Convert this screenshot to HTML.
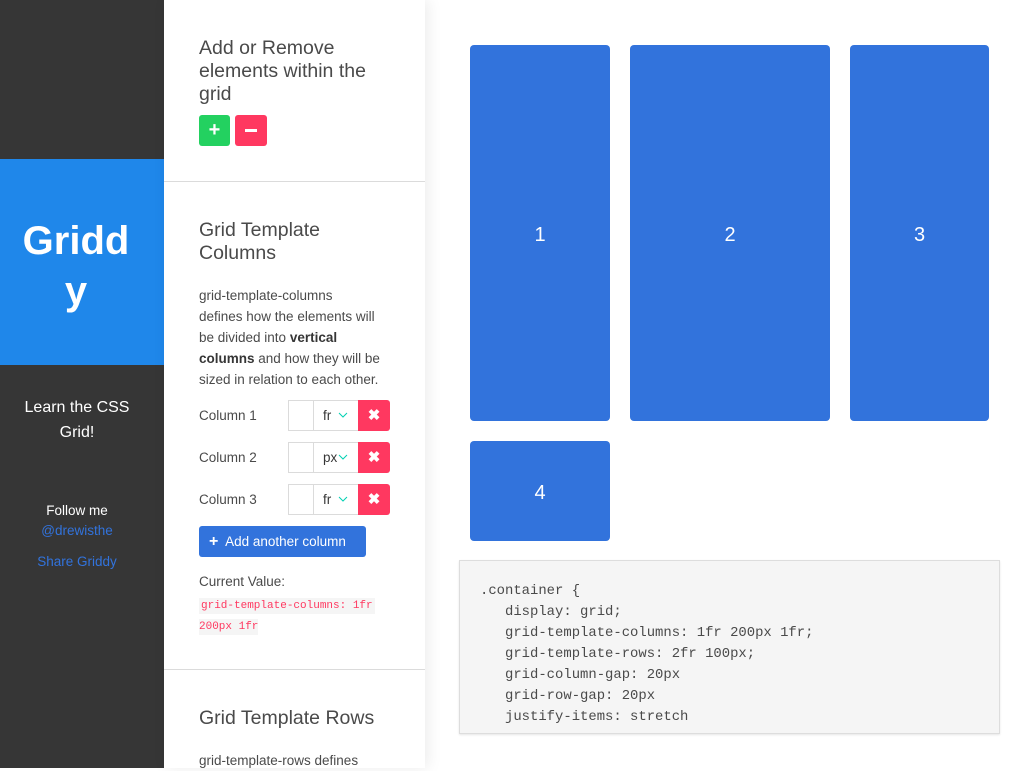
<!DOCTYPE html>
<html><head><meta charset="utf-8"><style>
*{box-sizing:border-box;margin:0;padding:0}
body{width:1024px;height:768px;overflow:hidden;font-family:"Liberation Sans",sans-serif;background:#fff;position:relative;color:#4a4a4a}
.a{position:absolute}
#side{left:0;top:0;width:164px;height:768px;background:#363636}
#logo{left:0;top:159px;width:164px;height:206px;background:#1f87ea;color:#fff;font-weight:bold;font-size:40px;line-height:50px;text-align:center;padding-top:57px;padding-right:12px}
#mid{left:164px;top:0;width:261px;height:768px;background:#fff;box-shadow:3px 0 14px rgba(0,0,0,.08)}
h2{position:absolute;left:35px;font-weight:normal;font-size:19.5px;line-height:23px;color:#4a4a4a;width:200px}
.hr{position:absolute;left:0;width:261px;height:1px;background:#dbdbdb}
p.t{position:absolute;left:35px;width:200px;font-size:13.5px;line-height:21px;color:#4a4a4a;white-space:nowrap}
.lbl{position:absolute;left:35px;font-size:13.5px}
.in{position:absolute;left:124px;width:26px;height:31px;border:1px solid #dbdbdb;border-right:none;background:#fff}
.sel{position:absolute;left:149px;width:46px;height:31px;border:1px solid #dbdbdb;font-size:13.5px;line-height:29px;padding-left:9px;color:#363636}
.sel svg{position:absolute;left:24px;top:11px}
.x{position:absolute;left:194px;width:32px;height:31px;background:#ff3860;border-radius:0 3px 3px 0;color:#fff;font-weight:bold;font-size:15px;text-align:center;line-height:31px}
.box{position:absolute;background:#3273dc;border-radius:4px;color:#fff;font-size:20px;display:flex;align-items:center;justify-content:center;padding-top:4px}
pre{position:absolute;left:459px;top:560px;width:541px;height:174px;background:#f5f5f5;border:1px solid #ddd;box-shadow:0 1px 2px rgba(0,0,0,.1);font-family:"Liberation Mono",monospace;font-size:13.9px;line-height:21px;padding:20px 20px;color:#4a4a4a}
</style></head><body>
<div class="a" id="side"></div>
<div class="a" id="logo">Gridd<br>y</div>
<div class="a" style="left:0;top:395px;width:154px;text-align:center;color:#fff;font-size:16px;line-height:25px">Learn the CSS<br>Grid!</div>
<div class="a" style="left:0;top:501px;width:154px;text-align:center;color:#fff;font-size:13.5px;line-height:20px">Follow me</div>
<div class="a" style="left:0;top:521px;width:154px;text-align:center;color:#3273dc;font-size:13.5px;line-height:20px">@drewisthe</div>
<div class="a" style="left:0;top:552px;width:154px;text-align:center;color:#3273dc;font-size:13.5px;line-height:20px">Share Griddy</div>

<div class="a" id="mid">
<h2 style="top:37px">Add or Remove elements within the grid</h2>
<div class="a" style="left:35px;top:115px;width:31px;height:31px;background:#23d160;border-radius:3px;color:#fff;font-weight:bold;font-size:20px;text-align:center;line-height:30px">+</div>
<div class="a" style="left:71px;top:115px;width:32px;height:31px;background:#ff3860;border-radius:3px"><div style="position:absolute;left:10px;top:14px;width:12px;height:3px;background:#fff"></div></div>
<div class="hr" style="top:181px"></div>
<h2 style="top:219px">Grid Template<br>Columns</h2>
<p class="t" style="top:285px">grid-template-columns<br>defines how the elements will<br>be divided into <b style="color:#363636">vertical</b><br><b style="color:#363636">columns</b> and how they will be<br>sized in relation to each other.</p>
<div class="lbl" style="top:408px">Column 1</div><div class="in" style="top:400px"></div><div class="sel" style="top:400px">fr<svg width="10" height="6"><path d="M1 1L5 5L9 1" stroke="#00d1b2" fill="none"/></svg></div><div class="x" style="top:400px">✖</div>
<div class="lbl" style="top:450px">Column 2</div><div class="in" style="top:442px"></div><div class="sel" style="top:442px">px<svg width="10" height="6"><path d="M1 1L5 5L9 1" stroke="#00d1b2" fill="none"/></svg></div><div class="x" style="top:442px">✖</div>
<div class="lbl" style="top:492px">Column 3</div><div class="in" style="top:484px"></div><div class="sel" style="top:484px">fr<svg width="10" height="6"><path d="M1 1L5 5L9 1" stroke="#00d1b2" fill="none"/></svg></div><div class="x" style="top:484px">✖</div>
<div class="a" style="left:35px;top:526px;width:167px;height:31px;background:#3273dc;border-radius:3px;color:#fff;font-size:13.5px;line-height:31px;padding-left:10px"><b style="font-size:16px">+</b>&nbsp; Add another column</div>
<div class="lbl" style="top:574px">Current Value:</div>
<div class="a" style="left:35px;top:596px;width:190px;font-family:'Liberation Mono',monospace;font-size:11px;line-height:21px;color:#ff3860"><span style="background:#f5f5f5;padding:2px 2px">grid-template-columns: 1fr</span><br><span style="background:#f5f5f5;padding:2px 0">200px 1fr</span></div>
<div class="hr" style="top:669px"></div>
<h2 style="top:707px">Grid Template Rows</h2>
<p class="t" style="top:750px">grid-template-rows defines</p>
</div>

<div class="box" style="left:470px;top:45px;width:140px;height:376px">1</div>
<div class="box" style="left:630px;top:45px;width:200px;height:376px">2</div>
<div class="box" style="left:850px;top:45px;width:139px;height:376px">3</div>
<div class="box" style="left:470px;top:441px;width:140px;height:100px">4</div>
<pre>.container {
   display: grid;
   grid-template-columns: 1fr 200px 1fr;
   grid-template-rows: 2fr 100px;
   grid-column-gap: 20px
   grid-row-gap: 20px
   justify-items: stretch</pre>
</body></html>
